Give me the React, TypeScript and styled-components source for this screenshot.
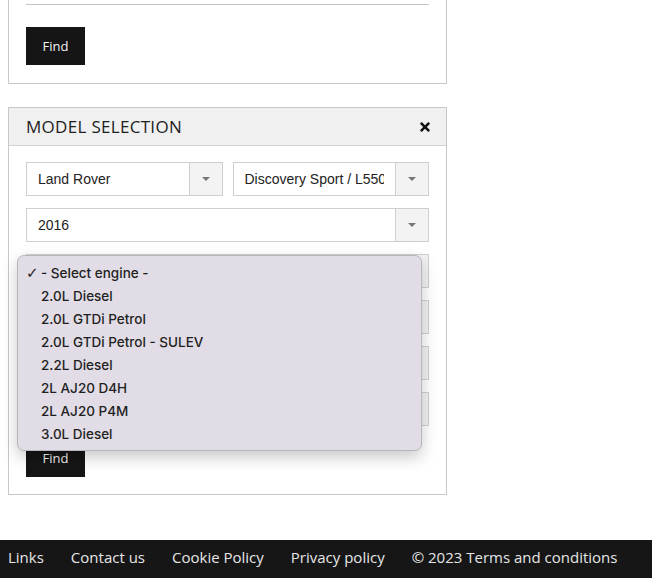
import React from "react";
import styled, { createGlobalStyle } from "styled-components";
import { FaTimes } from "react-icons/fa";

const Global = createGlobalStyle`
  html, body { margin: 0; padding: 0; background: #fff; }
  body { font-family: "Open Sans", "Liberation Sans", sans-serif; color: #222; overflow: hidden; }
  * { box-sizing: border-box; }
`;

const Page = styled.div`
  width: 652px;
  height: 578px;
  display: flex;
  flex-direction: column;
`;

const Main = styled.main`
  flex: 1;
  padding: 0 205px 0 8px;
  display: flex;
  flex-direction: column;
  gap: 23px;
`;

const Panel = styled.section<{ $cut?: boolean }>`
  border: 1px solid #c8c8c8;
  ${(p) => (p.$cut ? "border-top: none;" : "")}
  background: #fff;
  position: relative;
`;

const PanelHeader = styled.header`
  height: 38px;
  background: #f0f0f0;
  border-bottom: 1px solid #d2d2d2;
  display: flex;
  align-items: center;
  justify-content: space-between;
  padding: 0 14px 0 17px;
`;

const Title = styled.h2`
  margin: 0;
  font-family: "Open Sans", sans-serif;
  font-weight: 400;
  font-size: 17px;
  letter-spacing: 0.3px;
  color: #1e1e1e;
`;

const Close = styled.button`
  border: none;
  background: none;
  padding: 0;
  display: flex;
  color: #111;
  cursor: pointer;
`;

const Body = styled.div<{ $top?: boolean }>`
  padding: ${(p) => (p.$top ? "1px 17px 18px 17px" : "16px 17px 17px 17px")};
  display: flex;
  flex-direction: column;
  gap: 12px;
`;

const InputStub = styled.div`
  height: 4px;
  border-bottom: 1px solid #c4c4c4;
  margin-bottom: 10px;
`;

const Row = styled.div`
  display: flex;
  gap: 10px;
`;

const Select = styled.div`
  flex: 1;
  min-width: 0;
  height: 34px;
  border: 1px solid #cfcfcf;
  display: flex;
  background: #fff;
`;

const SelectText = styled.span`
  flex: 1;
  min-width: 0;
  margin: 0 11px 0 11px;
  font-family: "Liberation Sans", Arial, sans-serif;
  font-size: 14px;
  line-height: 32px;
  color: #222;
  white-space: nowrap;
  overflow: hidden;
`;

const ArrowBox = styled.span`
  width: 33px;
  flex: none;
  border-left: 1px solid #cfcfcf;
  background: #f3f3f3;
  display: flex;
  align-items: center;
  justify-content: center;
  &::after {
    content: "";
    border-left: 4px solid transparent;
    border-right: 4px solid transparent;
    border-top: 4px solid #777;
  }
`;

const ButtonWrap = styled.div<{ $lift?: boolean }>`
  margin-top: ${(p) => (p.$lift ? "1px" : "0")};
`;

const FindButton = styled.button`
  width: 59px;
  height: 38px;
  border: none;
  background: #151515;
  color: #f2f2f2;
  font-family: "Open Sans", sans-serif;
  font-size: 13px;
  padding: 0;
  cursor: pointer;
`;

const Menu = styled.ul`
  position: absolute;
  left: 8px;
  top: 147px;
  width: 405px;
  height: 196px;
  margin: 0;
  padding: 6px 0 0;
  list-style: none;
  background: #e1dce5;
  border: 1px solid #b9b5bc;
  border-radius: 7px;
  box-shadow: 0 6px 16px rgba(0, 0, 0, 0.22);
  font-family: "Inter", "Liberation Sans", sans-serif;
  font-weight: 500;
  font-size: 13.5px;
  color: #1f1f1f;
`;

const MenuItem = styled.li`
  height: 23px;
  line-height: 23px;
  padding-left: 23px;
  position: relative;
`;

const Check = styled.span`
  position: absolute;
  left: 8px;
  top: 0;
  font-family: "DejaVu Sans", sans-serif;
  font-size: 15px;
  font-weight: 400;
`;

const Footer = styled.footer`
  height: 38px;
  background: #161616;
  display: flex;
  align-items: center;
  gap: 27px;
  padding: 0 8px 4px;
`;

const FooterLink = styled.a`
  font-family: "Open Sans", sans-serif;
  font-size: 15px;
  color: #e6e6e6;
  text-decoration: none;
  white-space: nowrap;
`;

const engines = [
  "- Select engine -",
  "2.0L Diesel",
  "2.0L GTDi Petrol",
  "2.0L GTDi Petrol - SULEV",
  "2.2L Diesel",
  "2L AJ20 D4H",
  "2L AJ20 P4M",
  "3.0L Diesel",
];

function Dropdown({ value }: { value?: string }) {
  return (
    <Select>
      <SelectText>{value ?? ""}</SelectText>
      <ArrowBox />
    </Select>
  );
}

export default function App() {
  return (
    <Page>
      <Global />
      <Main>
        <Panel $cut>
          <Body $top>
            <InputStub />
            <ButtonWrap>
              <FindButton>Find</FindButton>
            </ButtonWrap>
          </Body>
        </Panel>
        <Panel>
          <PanelHeader>
            <Title>MODEL SELECTION</Title>
            <Close aria-label="close">
              <FaTimes size={14} />
            </Close>
          </PanelHeader>
          <Body>
            <Row>
              <Dropdown value="Land Rover" />
              <Dropdown value="Discovery Sport / L550" />
            </Row>
            <Row>
              <Dropdown value="2016" />
            </Row>
            <Row>
              <Dropdown />
            </Row>
            <Row>
              <Dropdown />
            </Row>
            <Row>
              <Dropdown />
            </Row>
            <Row>
              <Dropdown />
            </Row>
            <ButtonWrap $lift>
              <FindButton>Find</FindButton>
            </ButtonWrap>
          </Body>
          <Menu>
            {engines.map((e, i) => (
              <MenuItem key={e}>
                {i === 0 && <Check>✓</Check>}
                {e}
              </MenuItem>
            ))}
          </Menu>
        </Panel>
      </Main>
      <Footer>
        <FooterLink href="#">Links</FooterLink>
        <FooterLink href="#">Contact us</FooterLink>
        <FooterLink href="#">Cookie Policy</FooterLink>
        <FooterLink href="#">Privacy policy</FooterLink>
        <FooterLink href="#">© 2023 Terms and conditions</FooterLink>
      </Footer>
    </Page>
  );
}
